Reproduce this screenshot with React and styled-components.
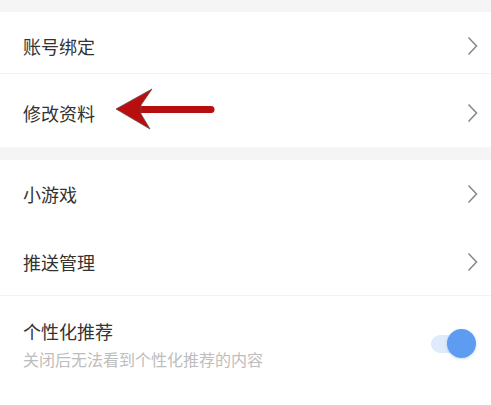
import React from "react";
import styled, { createGlobalStyle } from "styled-components";

const GlobalStyle = createGlobalStyle`
  body {
    margin: 0;
    background: #f5f5f5;
    font-family: "Noto Sans CJK SC", "Noto Sans", sans-serif;
  }
`;

const menuGroups = [
  [
    { label: "账号绑定", height: 62, shift: 6, divider: true },
    { label: "修改资料", height: 73, shift: 4, marked: true },
  ],
  [
    { label: "小游戏", height: 68, shift: 0 },
    { label: "推送管理", height: 68, shift: 0, divider: true },
  ],
];

const App = () => {
  return (
    <>
      <GlobalStyle />
      <Page>
        {menuGroups.map((group, i) => (
          <Card key={i}>
            {group.map((item) => (
              <Row
                key={item.label}
                $height={item.height}
                $shift={item.shift}
                $divider={item.divider}
              >
                <Label>{item.label}</Label>
                <Chevron />
                {item.marked && <PointerArrow />}
              </Row>
            ))}
            {i === 1 && (
              <SwitchRow>
                <SwitchText>
                  <Label>个性化推荐</Label>
                  <Hint>关闭后无法看到个性化推荐的内容</Hint>
                </SwitchText>
                <Toggle>
                  <Knob />
                </Toggle>
              </SwitchRow>
            )}
          </Card>
        ))}
      </Page>
    </>
  );
};

const Chevron = () => (
  <ChevronIcon viewBox="0 0 11 20" width="11" height="20">
    <path d="M1.5 1.5 L9.5 10 L1.5 18.5" fill="none" stroke="#8a8a8a" strokeWidth="1.6" />
  </ChevronIcon>
);

const PointerArrow = () => (
  <ArrowSvg viewBox="110 85 110 50" width="110" height="50">
    <line x1="134" y1="110.5" x2="211" y2="110.5" stroke="#b50f0f" strokeWidth="7" strokeLinecap="round" />
    <path
      d="M116 110 L152 90 L141 106 L141 115 L150 130 Z"
      fill="#b80e0e"
      stroke="#6b4b4b"
      strokeWidth="0.8"
      strokeLinejoin="round"
    />
  </ArrowSvg>
);

const Page = styled.div`
  width: 491px;
  padding-top: 12px;
  display: flex;
  flex-direction: column;
  gap: 13px;
`;

const Card = styled.div`
  background: #fff;
  display: flex;
  flex-direction: column;
`;

const Row = styled.div`
  position: relative;
  box-sizing: border-box;
  height: ${({ $height }) => $height}px;
  padding: ${({ $shift }) => $shift}px 13px 0 23px;
  display: flex;
  align-items: center;
  justify-content: space-between;
  border-bottom: ${({ $divider }) => ($divider ? "1px solid #f3f3f3" : "none")};
`;

const Label = styled.span`
  font-size: 18px;
  line-height: 24px;
  color: #333;
`;

const Hint = styled.span`
  font-size: 16px;
  line-height: 20px;
  color: #bdbdbd;
`;

const ChevronIcon = styled.svg`
  display: block;
`;

const ArrowSvg = styled.svg`
  position: absolute;
  left: 110px;
  top: 10px;
`;

const SwitchRow = styled.div`
  box-sizing: border-box;
  height: 112px;
  padding: 0 16px 16px 23px;
  display: flex;
  align-items: center;
  justify-content: space-between;
`;

const SwitchText = styled.div`
  display: flex;
  flex-direction: column;
  gap: 6px;
`;

const Toggle = styled.div`
  position: relative;
  width: 44px;
  height: 18px;
  border-radius: 9px;
  background: #dfeafb;
`;

const Knob = styled.div`
  position: absolute;
  right: -1px;
  top: -6px;
  width: 29px;
  height: 29px;
  border-radius: 50%;
  background: #5d9cf0;
  box-shadow: 0 1px 3px rgba(60, 110, 180, 0.25);
`;

export default App;
